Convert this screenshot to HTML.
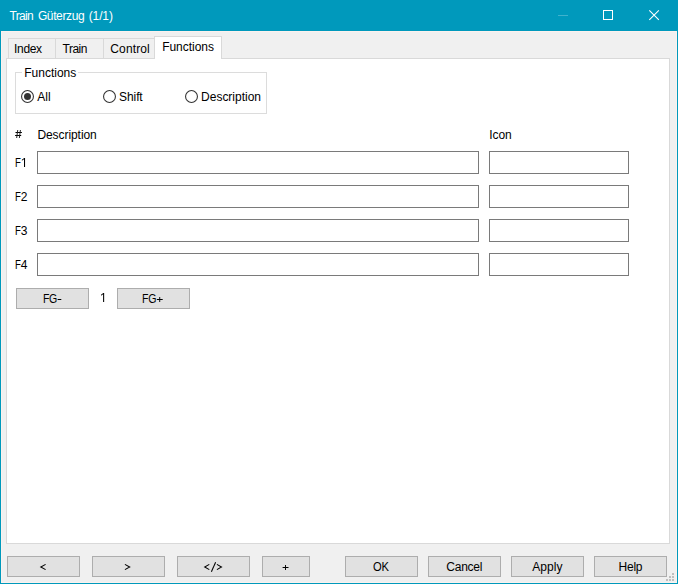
<!DOCTYPE html>
<html><head><meta charset="utf-8"><title>Train Güterzug (1/1)</title>
<style>
html,body{margin:0;padding:0}
body{width:678px;height:584px;background:#0099BC;position:relative;overflow:hidden;font-family:"Liberation Sans",sans-serif;font-size:12px}
.abs,.t,.btn,.inp,.radio,.gd{position:absolute;box-sizing:border-box}
.client{left:1px;top:31px;width:676px;height:552px;background:#F0F0F0;border:1px solid #FCF2EE}
.t{font:12px/1 "Liberation Sans",sans-serif;white-space:pre;color:#000;transform-origin:0 0}
.btn{background:#E1E1E1;border:1px solid #ADADAD}
.inp{background:#fff;border:1px solid #7A7A7A}
.radio{width:13px;height:13px;border-radius:50%;border:1px solid #333;background:#fff}
.radio i{position:absolute;left:2px;top:2px;width:7px;height:7px;border-radius:50%;background:#333}
.gd{width:2px;height:2px;background:#BFBFBF}
.panel{left:6px;top:58px;width:664px;height:486px;background:#fff;border:1px solid #D9D9D9}
.tab{background:#F0F0F0;border:1px solid #D9D9D9;border-bottom:none;top:38px;height:20px}
.tabsel{background:#fff;border:1px solid #D9D9D9;border-bottom:none;left:154px;top:36px;width:68px;height:23px}
.gb{left:15px;top:72px;width:252px;height:42px;border:1px solid #DCDCDC}
.gbgap{left:22px;top:72px;width:56px;height:1px;background:#fff}
</style></head><body>
<div class="abs client"></div>
<svg class="abs" style="left:550px;top:0" width="128" height="31" viewBox="0 0 128 31" shape-rendering="crispEdges">
<rect x="8" y="15" width="10" height="1" fill="#40B2CD"/>
<rect x="53.5" y="10.5" width="9" height="9" fill="none" stroke="#fff" stroke-width="1"/>
<g shape-rendering="geometricPrecision" stroke="#fff" stroke-width="1.1" fill="none"><path d="M99.3 10.3 L108.85 19.85 M108.85 10.3 L99.3 19.85"/></g>
</svg>
<div class="abs tab" style="left:8px;width:48px"></div>
<div class="abs tab" style="left:55px;width:49px"></div>
<div class="abs tab" style="left:103px;width:52px"></div>
<div class="abs panel"></div>
<div class="abs tabsel"></div>
<div class="abs gb"></div><div class="abs gbgap"></div>
<div class="inp" style="left:37px;top:151px;width:442px;height:23px"></div>
<div class="inp" style="left:489px;top:151px;width:140px;height:23px"></div>
<div class="inp" style="left:37px;top:185px;width:442px;height:23px"></div>
<div class="inp" style="left:489px;top:185px;width:140px;height:23px"></div>
<div class="inp" style="left:37px;top:219px;width:442px;height:23px"></div>
<div class="inp" style="left:489px;top:219px;width:140px;height:23px"></div>
<div class="inp" style="left:37px;top:253px;width:442px;height:23px"></div>
<div class="inp" style="left:489px;top:253px;width:140px;height:23px"></div>
<div class="btn" style="left:16px;top:288px;width:73px;height:21px"></div>
<div class="btn" style="left:117px;top:288px;width:73px;height:21px"></div>
<div class="btn" style="left:7px;top:556px;width:73px;height:21px"></div>
<div class="btn" style="left:92px;top:556px;width:73px;height:21px"></div>
<div class="btn" style="left:177px;top:556px;width:73px;height:21px"></div>
<div class="btn" style="left:262px;top:556px;width:48px;height:21px"></div>
<div class="btn" style="left:345px;top:556px;width:73px;height:21px"></div>
<div class="btn" style="left:428px;top:556px;width:73px;height:21px"></div>
<div class="btn" style="left:511px;top:556px;width:73px;height:21px"></div>
<div class="btn" style="left:594px;top:556px;width:73px;height:21px"></div>
<svg class="abs" style="left:21px;top:90px" width="13" height="13" viewBox="0 0 13 13"><circle cx="6.5" cy="6.5" r="5.95" fill="#fff" stroke="#333" stroke-width="1.08"/><circle cx="6.5" cy="6.5" r="3.5" fill="#333"/></svg>
<svg class="abs" style="left:103px;top:90px" width="13" height="13" viewBox="0 0 13 13"><circle cx="6.5" cy="6.5" r="5.95" fill="#fff" stroke="#333" stroke-width="1.08"/></svg>
<svg class="abs" style="left:185px;top:90px" width="13" height="13" viewBox="0 0 13 13"><circle cx="6.5" cy="6.5" r="5.95" fill="#fff" stroke="#333" stroke-width="1.08"/></svg>
<div class="gd" style="left:672px;top:573px"></div>
<div class="gd" style="left:669px;top:576px"></div>
<div class="gd" style="left:672px;top:576px"></div>
<div class="gd" style="left:666px;top:579px"></div>
<div class="gd" style="left:669px;top:579px"></div>
<div class="gd" style="left:672px;top:579px"></div>
<span class="t" id="title1" style="left:9.55px;top:10px;letter-spacing:-0.700px;color:#fff;">Train</span>
<span class="t" id="title2" style="left:37.90px;top:10px;letter-spacing:-0.371px;color:#fff;">Güterzug</span>
<span class="t" id="title3" style="left:88.75px;top:10px;letter-spacing:-0.138px;color:#fff;">(1/1)</span>
<span class="t" id="t_index" style="left:14.00px;top:43px;letter-spacing:-0.312px;">Index</span>
<span class="t" id="t_train" style="left:62.55px;top:43px;letter-spacing:-0.500px;">Train</span>
<span class="t" id="t_control" style="left:110.30px;top:43px;letter-spacing:0.133px;">Control</span>
<span class="t" id="t_func" style="left:162.20px;top:41px;letter-spacing:-0.037px;">Functions</span>
<span class="t" id="legend" style="left:24.30px;top:67px;letter-spacing:-0.013px;">Functions</span>
<span class="t" id="r_all" style="left:37.30px;top:91px;letter-spacing:0.050px;">All</span>
<span class="t" id="r_shift" style="left:119.10px;top:91px;letter-spacing:-0.100px;">Shift</span>
<span class="t" id="r_desc" style="left:201.10px;top:91px;letter-spacing:-0.015px;">Description</span>
<span class="t" id="h_desc" style="left:37.40px;top:129px;letter-spacing:-0.065px;">Description</span>
<span class="t" id="h_icon" style="left:489.20px;top:129px;letter-spacing:-0.067px;">Icon</span>
<span class="t" id="f1a" style="left:15.35px;top:157px;transform:scaleX(0.800);">F</span>
<span class="t" id="f2a" style="left:15.35px;top:191px;transform:scaleX(0.800);">F</span>
<span class="t" id="f2b" style="left:20.70px;top:191px;">2</span>
<span class="t" id="f3a" style="left:15.35px;top:225px;transform:scaleX(0.800);">F</span>
<span class="t" id="f3b" style="left:20.70px;top:225px;">3</span>
<span class="t" id="f4a" style="left:15.35px;top:259px;transform:scaleX(0.800);">F</span>
<span class="t" id="f4b" style="left:20.85px;top:259px;">4</span>
<span class="t" id="fgm" style="left:42.95px;top:293px;letter-spacing:-0.511px;transform:scaleX(0.880);">FG</span>
<span class="t" id="fgp" style="left:141.85px;top:293px;letter-spacing:-0.284px;transform:scaleX(0.880);">FG</span>
<span class="t" id="b_ok" style="left:373.20px;top:561px;letter-spacing:-0.323px;transform:scaleX(0.930);">OK</span>
<span class="t" id="b_cancel" style="left:446.30px;top:561px;letter-spacing:-0.240px;">Cancel</span>
<span class="t" id="b_apply" style="left:532.20px;top:561px;letter-spacing:0.075px;">Apply</span>
<span class="t" id="b_help" style="left:618.50px;top:561px;letter-spacing:-0.217px;">Help</span>
<svg class="abs" style="left:0;top:0" width="678" height="584" viewBox="0 0 678 584"><rect x="15.5" y="132" width="6.4" height="1" fill="#000"/><rect x="15.1" y="135" width="6.1" height="1" fill="#000"/><path d="M17.75 130 L16.65 138 M20.45 130 L19.35 138" stroke="#1a1a1a" stroke-width="0.95" fill="none"/><path d="M104.15 293 L104.15 302 L103.10 302 L103.10 294.35 L101.00 295.65 L101.00 294.65 L103.30 293 Z" fill="#000"/><path d="M25.05 158 L25.05 167 L24.00 167 L24.00 159.35 L21.90 160.65 L21.90 159.65 L24.20 158 Z" fill="#000"/><path d="M45.60 564.40 L40.80 567.00 L45.60 569.60" fill="none" stroke="#000" stroke-width="1.05"/><path d="M124.90 564.40 L129.70 567.00 L124.90 569.60" fill="none" stroke="#000" stroke-width="1.05"/><path d="M209.30 564.40 L204.70 567.00 L209.30 569.60" fill="none" stroke="#000" stroke-width="1.05"/><path d="M216.90 564.40 L221.50 567.00 L216.90 569.60" fill="none" stroke="#000" stroke-width="1.05"/><path d="M215.6 562.2 L211.4 571.7" stroke="#000" stroke-width="1.05" fill="none"/><rect x="57.6" y="299" width="3.7" height="1" fill="#000"/><rect x="156.8" y="299" width="5.9" height="1" fill="#000"/><rect x="159.25" y="297" width="0.95" height="5" fill="#000"/><rect x="282.6" y="567" width="5.9" height="1" fill="#000"/><rect x="285.05" y="565" width="0.95" height="5" fill="#000"/></svg>
</body></html>
